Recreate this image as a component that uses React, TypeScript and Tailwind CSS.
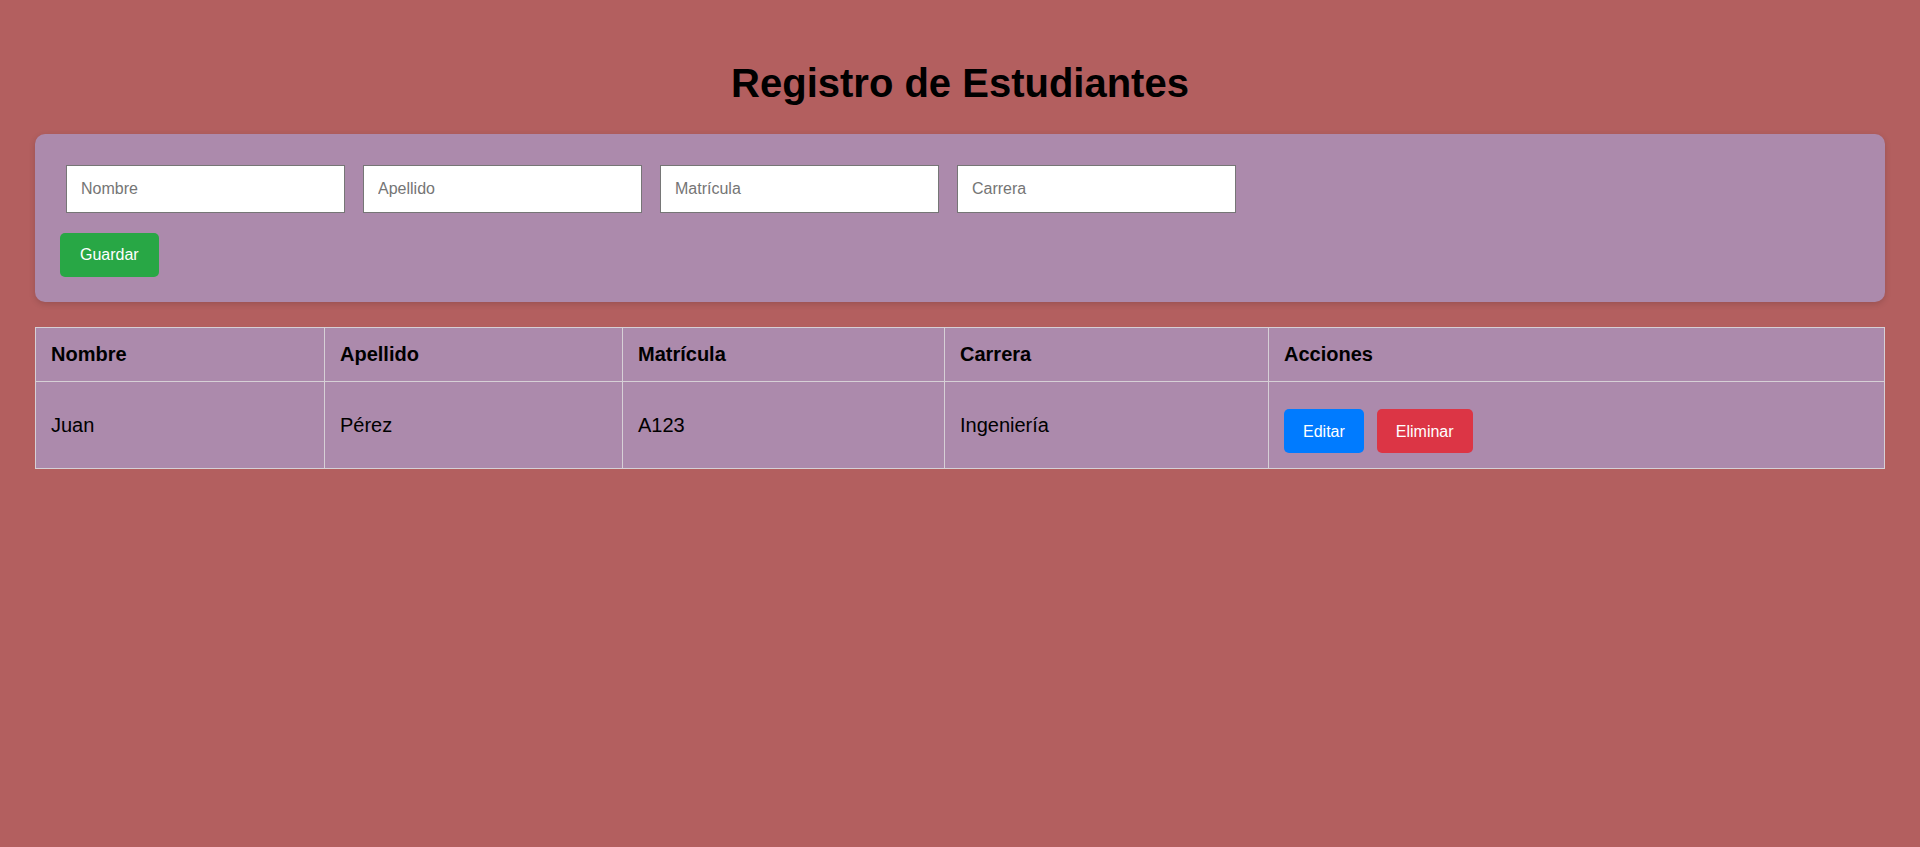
import React from 'react'

const students = [
  { nombre: 'Juan', apellido: 'Pérez', matricula: 'A123', carrera: 'Ingeniería' },
]

export default function App() {
  return (
    <div className="min-h-[847px] w-full bg-[#b35f5f] px-[35px] pt-[60px] pb-10 font-['Liberation_Sans',Arial,sans-serif] text-black">
      <h1 className="mb-[28px] text-center text-[40px] font-bold leading-[46px]">Registro de Estudiantes</h1>

      <div className="rounded-[10px] bg-[#ac8aac] p-[25px] shadow-[0_2px_6px_rgba(0,0,0,0.15)]">
        <div className="ml-[6px] mt-[6px] flex gap-[18px]">
          {['Nombre', 'Apellido', 'Matrícula', 'Carrera'].map((p) => (
            <input
              key={p}
              type="text"
              placeholder={p}
              className="h-[48px] w-[279px] border border-[#767676] bg-white px-[14px] text-[16px] text-black placeholder:text-[#757575] outline-none"
            />
          ))}
        </div>
        <button className="mt-[20px] h-[44px] rounded-[5px] bg-[#28a745] px-[20px] text-[16px] text-white">
          Guardar
        </button>
      </div>

      <table className="mt-[25px] w-full table-fixed border-collapse bg-[#ac8aac] text-left text-[20px] leading-[23px]">
        <thead>
          <tr>
            <th className="w-[289px] border border-[#d6d0d6] px-[15px] py-[15px] font-bold">Nombre</th>
            <th className="w-[298px] border border-[#d6d0d6] px-[15px] py-[15px] font-bold">Apellido</th>
            <th className="w-[322px] border border-[#d6d0d6] px-[15px] py-[15px] font-bold">Matrícula</th>
            <th className="w-[324px] border border-[#d6d0d6] px-[15px] py-[15px] font-bold">Carrera</th>
            <th className="border border-[#d6d0d6] px-[15px] py-[15px] font-bold">Acciones</th>
          </tr>
        </thead>
        <tbody>
          {students.map((s) => (
            <tr key={s.matricula}>
              <td className="border border-[#d6d0d6] px-[15px] py-[15px] align-middle">{s.nombre}</td>
              <td className="border border-[#d6d0d6] px-[15px] py-[15px] align-middle">{s.apellido}</td>
              <td className="border border-[#d6d0d6] px-[15px] py-[15px] align-middle">{s.matricula}</td>
              <td className="border border-[#d6d0d6] px-[15px] py-[15px] align-middle">{s.carrera}</td>
              <td className="border border-[#d6d0d6] px-[15px] py-[15px] align-middle">
                <div className="flex gap-[13px] pt-[12px]">
                  <button className="h-[44px] rounded-[5px] bg-[#007bff] px-[19px] text-[16px] text-white">Editar</button>
                  <button className="h-[44px] rounded-[5px] bg-[#dc3545] px-[19px] text-[16px] text-white">Eliminar</button>
                </div>
              </td>
            </tr>
          ))}
        </tbody>
      </table>
    </div>
  )
}
